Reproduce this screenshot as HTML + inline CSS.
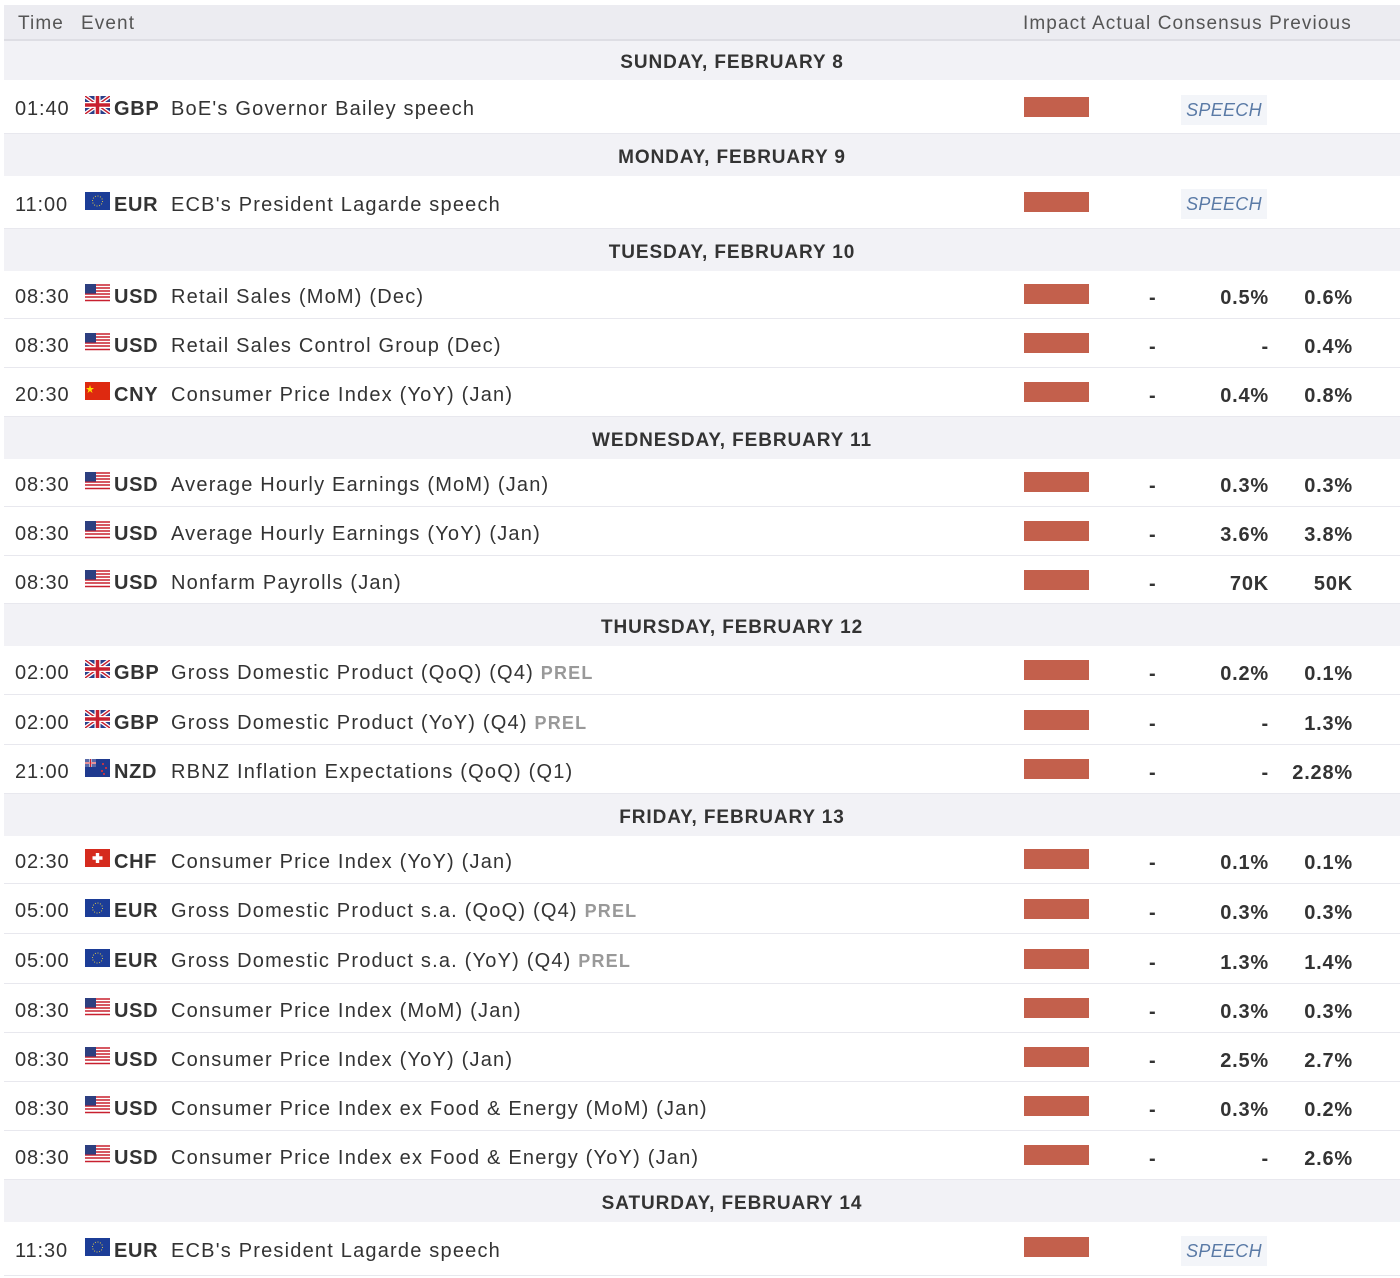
<!DOCTYPE html><html><head><meta charset="utf-8"><style>
body{margin:0;width:1400px;height:1278px;background:#fff;font-family:"Liberation Sans",sans-serif;overflow:hidden;position:relative}
.hd{position:absolute;left:4px;top:5px;width:1396px;height:34px;background:#ececf1;border-bottom:2px solid #dedee4;color:#555;font-size:19px;letter-spacing:1.1px}
.hd span{position:absolute;top:8px}
.day{position:absolute;left:4px;width:1396px;background:#f2f2f6;color:#333;font-weight:bold;font-size:19px;letter-spacing:.9px;text-align:center;box-sizing:border-box}
.day div{position:absolute;left:0;width:1456px;text-align:center;margin-top:2px}
.r{position:absolute;left:4px;width:1396px;background:#fff;border-bottom:1px solid #e8e8ee;color:#333;font-size:20px;letter-spacing:1.2px;box-sizing:border-box}
.r>*{position:absolute}
.r>span{margin-top:2px}
.t{left:11px;letter-spacing:.9px}.f{left:81px;width:25px;height:18px}.c{left:110px;font-weight:bold;letter-spacing:.7px}.e{left:167px;white-space:nowrap}
.p{color:#999;font-weight:bold;font-size:18px}
.bar{left:1020px;width:65px;height:20px;background:#c3604c}
.a{left:1145px;font-weight:bold}
.cs{right:131px;font-weight:bold;letter-spacing:.8px}.pv{right:47px;font-weight:bold;letter-spacing:.8px}
.r>span.sp{left:1177px;width:86px;height:30px;background:#f3f5f9;color:#5a7aa6;font-style:italic;font-size:18px;text-align:center;line-height:30px;letter-spacing:.3px;margin-top:0}
</style></head><body>
<div class="hd"><span style="left:14px">Time</span><span style="left:77px">Event</span><span style="left:1019px">Impact Actual Consensus Previous</span></div>
<svg width="0" height="0" style="position:absolute"><defs>
<symbol id="gb" viewBox="0 0 25 18"><rect width="25" height="18" fill="#2a3f8a"/><path d="M0 0L25 18M25 0L0 18" stroke="#fff" stroke-width="4"/><path d="M0 0L25 18M25 0L0 18" stroke="#c8202f" stroke-width="1.5"/><path d="M12.5 0V18M0 9H25" stroke="#fff" stroke-width="6"/><path d="M12.5 0V18M0 9H25" stroke="#c8202f" stroke-width="3.5"/></symbol>
<symbol id="eu" viewBox="0 0 25 18"><rect width="25" height="18" fill="#1c3d97"/><circle cx="12.5" cy="9" r="5" fill="none" stroke="#d8c34a" stroke-width="1" stroke-dasharray="1 1.6"/></symbol>
<symbol id="us" viewBox="0 0 25 18"><rect width="25" height="18" fill="#fff"/><path d="M0 1H25M0 4H25M0 7H25M0 10H25M0 13H25M0 16.5H25" stroke="#c8202f" stroke-width="1.6"/><rect width="11" height="9.5" fill="#2d3f80"/></symbol>
<symbol id="cn" viewBox="0 0 25 18"><rect width="25" height="18" fill="#de2910"/><path d="M5 3l1 3h3l-2.5 2 1 3L5 9 2.5 11l1-3L1 6h3z" fill="#ffde00"/></symbol>
<symbol id="nz" viewBox="0 0 25 18"><rect width="25" height="18" fill="#1f3a8f"/><rect width="11" height="8" fill="#5a6aa8"/><path d="M5.5 0V8M0 4H11" stroke="#fff" stroke-width="2"/><path d="M5.5 0V8M0 4H11" stroke="#c8202f" stroke-width="1"/><circle cx="18" cy="5" r="1" fill="#e33"/><circle cx="21" cy="9" r="1" fill="#e33"/><circle cx="17" cy="12" r="1" fill="#e33"/><circle cx="19" cy="15" r="1" fill="#e33"/></symbol>
<symbol id="ch" viewBox="0 0 25 18"><rect width="25" height="18" fill="#d52b1e"/><path d="M12.5 4V14M7.5 9H17.5" stroke="#fff" stroke-width="3.4"/></symbol>
</defs></svg>

<div class="day" style="top:41px;height:39px"><div style="top:9px">SUNDAY, FEBRUARY 8</div></div>
<div class="r" style="top:80px;height:54px"><span class="t" style="top:16px">01:40</span><svg class="f" style="top:16px"><use href="#gb"/></svg><span class="c" style="top:16px">GBP</span><span class="e" style="top:16px">BoE's Governor Bailey speech</span><i class="bar" style="top:17px"></i><span class="sp" style="top:15px">SPEECH</span></div>
<div class="day" style="top:134px;height:42px"><div style="top:11px">MONDAY, FEBRUARY 9</div></div>
<div class="r" style="top:176px;height:53px"><span class="t" style="top:16px">11:00</span><svg class="f" style="top:16px"><use href="#eu"/></svg><span class="c" style="top:16px">EUR</span><span class="e" style="top:16px">ECB's President Lagarde speech</span><i class="bar" style="top:16px"></i><span class="sp" style="top:13px">SPEECH</span></div>
<div class="day" style="top:229px;height:42px"><div style="top:11px">TUESDAY, FEBRUARY 10</div></div>
<div class="r" style="top:271px;height:48px"><span class="t" style="top:13px">08:30</span><svg class="f" style="top:13px"><use href="#us"/></svg><span class="c" style="top:13px">USD</span><span class="e" style="top:13px">Retail Sales (MoM) (Dec)</span><i class="bar" style="top:13px"></i><span class="a" style="top:14px">-</span><span class="cs" style="top:14px">0.5%</span><span class="pv" style="top:14px">0.6%</span></div>
<div class="r" style="top:319px;height:49px"><span class="t" style="top:14px">08:30</span><svg class="f" style="top:14px"><use href="#us"/></svg><span class="c" style="top:14px">USD</span><span class="e" style="top:14px">Retail Sales Control Group (Dec)</span><i class="bar" style="top:14px"></i><span class="a" style="top:15px">-</span><span class="cs" style="top:15px">-</span><span class="pv" style="top:15px">0.4%</span></div>
<div class="r" style="top:368px;height:49px"><span class="t" style="top:14px">20:30</span><svg class="f" style="top:14px"><use href="#cn"/></svg><span class="c" style="top:14px">CNY</span><span class="e" style="top:14px">Consumer Price Index (YoY) (Jan)</span><i class="bar" style="top:14px"></i><span class="a" style="top:15px">-</span><span class="cs" style="top:15px">0.4%</span><span class="pv" style="top:15px">0.8%</span></div>
<div class="day" style="top:417px;height:42px"><div style="top:11px">WEDNESDAY, FEBRUARY 11</div></div>
<div class="r" style="top:459px;height:48px"><span class="t" style="top:13px">08:30</span><svg class="f" style="top:13px"><use href="#us"/></svg><span class="c" style="top:13px">USD</span><span class="e" style="top:13px">Average Hourly Earnings (MoM) (Jan)</span><i class="bar" style="top:13px"></i><span class="a" style="top:14px">-</span><span class="cs" style="top:14px">0.3%</span><span class="pv" style="top:14px">0.3%</span></div>
<div class="r" style="top:507px;height:49px"><span class="t" style="top:14px">08:30</span><svg class="f" style="top:14px"><use href="#us"/></svg><span class="c" style="top:14px">USD</span><span class="e" style="top:14px">Average Hourly Earnings (YoY) (Jan)</span><i class="bar" style="top:14px"></i><span class="a" style="top:15px">-</span><span class="cs" style="top:15px">3.6%</span><span class="pv" style="top:15px">3.8%</span></div>
<div class="r" style="top:556px;height:48px"><span class="t" style="top:14px">08:30</span><svg class="f" style="top:14px"><use href="#us"/></svg><span class="c" style="top:14px">USD</span><span class="e" style="top:14px">Nonfarm Payrolls (Jan)</span><i class="bar" style="top:14px"></i><span class="a" style="top:15px">-</span><span class="cs" style="top:15px">70K</span><span class="pv" style="top:15px">50K</span></div>
<div class="day" style="top:604px;height:42px"><div style="top:11px">THURSDAY, FEBRUARY 12</div></div>
<div class="r" style="top:646px;height:49px"><span class="t" style="top:14px">02:00</span><svg class="f" style="top:14px"><use href="#gb"/></svg><span class="c" style="top:14px">GBP</span><span class="e" style="top:14px">Gross Domestic Product (QoQ) (Q4) <b class="p">PREL</b></span><i class="bar" style="top:14px"></i><span class="a" style="top:15px">-</span><span class="cs" style="top:15px">0.2%</span><span class="pv" style="top:15px">0.1%</span></div>
<div class="r" style="top:695px;height:50px"><span class="t" style="top:15px">02:00</span><svg class="f" style="top:15px"><use href="#gb"/></svg><span class="c" style="top:15px">GBP</span><span class="e" style="top:15px">Gross Domestic Product (YoY) (Q4) <b class="p">PREL</b></span><i class="bar" style="top:15px"></i><span class="a" style="top:16px">-</span><span class="cs" style="top:16px">-</span><span class="pv" style="top:16px">1.3%</span></div>
<div class="r" style="top:745px;height:49px"><span class="t" style="top:14px">21:00</span><svg class="f" style="top:14px"><use href="#nz"/></svg><span class="c" style="top:14px">NZD</span><span class="e" style="top:14px">RBNZ Inflation Expectations (QoQ) (Q1)</span><i class="bar" style="top:14px"></i><span class="a" style="top:15px">-</span><span class="cs" style="top:15px">-</span><span class="pv" style="top:15px">2.28%</span></div>
<div class="day" style="top:794px;height:42px"><div style="top:11px">FRIDAY, FEBRUARY 13</div></div>
<div class="r" style="top:836px;height:48px"><span class="t" style="top:13px">02:30</span><svg class="f" style="top:13px"><use href="#ch"/></svg><span class="c" style="top:13px">CHF</span><span class="e" style="top:13px">Consumer Price Index (YoY) (Jan)</span><i class="bar" style="top:13px"></i><span class="a" style="top:14px">-</span><span class="cs" style="top:14px">0.1%</span><span class="pv" style="top:14px">0.1%</span></div>
<div class="r" style="top:884px;height:50px"><span class="t" style="top:14px">05:00</span><svg class="f" style="top:15px"><use href="#eu"/></svg><span class="c" style="top:14px">EUR</span><span class="e" style="top:14px">Gross Domestic Product s.a. (QoQ) (Q4) <b class="p">PREL</b></span><i class="bar" style="top:15px"></i><span class="a" style="top:16px">-</span><span class="cs" style="top:16px">0.3%</span><span class="pv" style="top:16px">0.3%</span></div>
<div class="r" style="top:934px;height:50px"><span class="t" style="top:14px">05:00</span><svg class="f" style="top:15px"><use href="#eu"/></svg><span class="c" style="top:14px">EUR</span><span class="e" style="top:14px">Gross Domestic Product s.a. (YoY) (Q4) <b class="p">PREL</b></span><i class="bar" style="top:15px"></i><span class="a" style="top:16px">-</span><span class="cs" style="top:16px">1.3%</span><span class="pv" style="top:16px">1.4%</span></div>
<div class="r" style="top:984px;height:49px"><span class="t" style="top:14px">08:30</span><svg class="f" style="top:14px"><use href="#us"/></svg><span class="c" style="top:14px">USD</span><span class="e" style="top:14px">Consumer Price Index (MoM) (Jan)</span><i class="bar" style="top:14px"></i><span class="a" style="top:15px">-</span><span class="cs" style="top:15px">0.3%</span><span class="pv" style="top:15px">0.3%</span></div>
<div class="r" style="top:1033px;height:49px"><span class="t" style="top:14px">08:30</span><svg class="f" style="top:14px"><use href="#us"/></svg><span class="c" style="top:14px">USD</span><span class="e" style="top:14px">Consumer Price Index (YoY) (Jan)</span><i class="bar" style="top:14px"></i><span class="a" style="top:15px">-</span><span class="cs" style="top:15px">2.5%</span><span class="pv" style="top:15px">2.7%</span></div>
<div class="r" style="top:1082px;height:49px"><span class="t" style="top:14px">08:30</span><svg class="f" style="top:14px"><use href="#us"/></svg><span class="c" style="top:14px">USD</span><span class="e" style="top:14px">Consumer Price Index ex Food &amp; Energy (MoM) (Jan)</span><i class="bar" style="top:14px"></i><span class="a" style="top:15px">-</span><span class="cs" style="top:15px">0.3%</span><span class="pv" style="top:15px">0.2%</span></div>
<div class="r" style="top:1131px;height:49px"><span class="t" style="top:14px">08:30</span><svg class="f" style="top:14px"><use href="#us"/></svg><span class="c" style="top:14px">USD</span><span class="e" style="top:14px">Consumer Price Index ex Food &amp; Energy (YoY) (Jan)</span><i class="bar" style="top:14px"></i><span class="a" style="top:15px">-</span><span class="cs" style="top:15px">-</span><span class="pv" style="top:15px">2.6%</span></div>
<div class="day" style="top:1180px;height:42px"><div style="top:11px">SATURDAY, FEBRUARY 14</div></div>
<div class="r" style="top:1222px;height:54px"><span class="t" style="top:16px">11:30</span><svg class="f" style="top:16px"><use href="#eu"/></svg><span class="c" style="top:16px">EUR</span><span class="e" style="top:16px">ECB's President Lagarde speech</span><i class="bar" style="top:15px"></i><span class="sp" style="top:14px">SPEECH</span></div>
</body></html>
